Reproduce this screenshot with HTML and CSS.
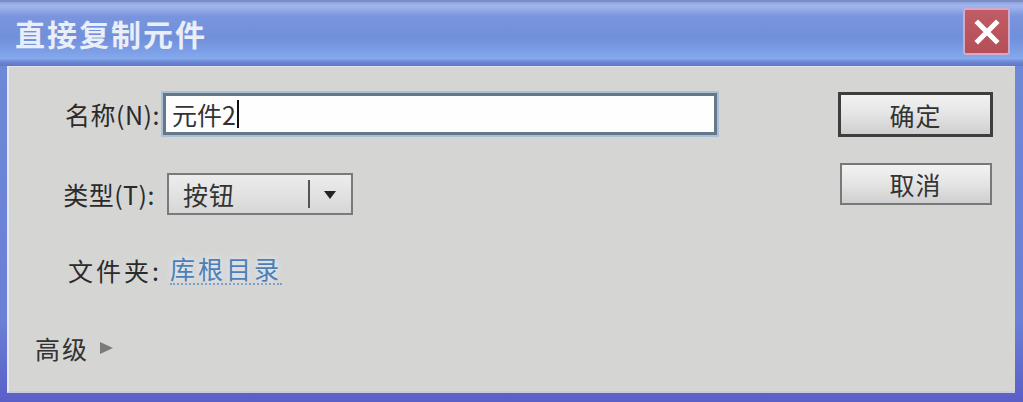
FILE: index.html
```html
<!DOCTYPE html>
<html lang="zh">
<head>
<meta charset="utf-8">
<link rel="stylesheet" href="styles.css">
</head>
<body>
<div class="window">
  <div class="titlebar">
    <span class="title">直接复制元件</span>
    <button class="close" aria-label="关闭">
      <svg width="30" height="30" viewBox="0 0 30 30"><path d="M6 6 L24 24 M24 6 L6 24" stroke="#fff" stroke-width="5" stroke-linecap="square"/></svg>
    </button>
  </div>
  <div class="content">
    <div class="form">
      <div class="row row-name">
        <span class="label">名称(N):</span>
        <div class="input"><span>元件2</span><span class="caret"></span></div>
      </div>
      <div class="row row-type">
        <span class="label">类型(T):</span>
        <div class="select">
          <span class="select-text">按钮</span>
          <span class="select-sep"></span>
          <span class="select-arrow"></span>
        </div>
      </div>
      <div class="row row-folder">
        <span class="label">文件夹:</span>
        <a class="link">库根目录</a>
      </div>
      <div class="row row-adv">
        <span class="adv">高级</span>
        <span class="tri"></span>
      </div>
    </div>
    <div class="buttons">
      <button class="btn btn-default">确定</button>
      <button class="btn">取消</button>
    </div>
  </div>
</div>
</body>
</html>
```

FILE: styles.css
```css
* { box-sizing: border-box; }
html, body { margin: 0; padding: 0; }
body {
  width: 1023px;
  height: 402px;
  overflow: hidden;
  font-family: "Noto Sans CJK SC", "Liberation Sans", sans-serif;
}
.window {
  width: 1023px;
  height: 402px;
  display: flex;
  flex-direction: column;
  background: linear-gradient(180deg, #6f8bd8 0%, #6a7fd6 80%, #5a5fc8 100%);
  border-top: 2px solid #7b8cc2;
  padding: 0 8px 9px 7px;
}
.titlebar {
  height: 64px;
  margin: 0 -8px 0 -7px;
  display: flex;
  align-items: center;
  justify-content: space-between;
  padding: 0 13px 0 15px;
  background: linear-gradient(180deg, #8ea2de 0%, #a3b6ef 6%, #7a95dd 22%, #7090da 55%, #7c9fe6 78%, #86aaee 88%, #6a86d2 94%, #5f78c6 100%);
  flex-shrink: 0;
}
.title {
  color: #e9eef9;
  font-size: 30px;
  font-weight: 700;
  letter-spacing: 2px;
  line-height: 1;
  margin-top: -2px;
}
.close {
  width: 47px;
  height: 47px;
  border: 2px solid #d4a8c6;
  border-radius: 3px;
  background: linear-gradient(180deg, #c05c64 0%, #b44f58 100%);
  display: flex;
  align-items: center;
  justify-content: center;
  padding: 0;
  margin-top: -5px;
}
.close svg { display: block; }
.content {
  flex: 1;
  background: #d5d5d4;
  border-left: 2px solid #e4e6f0;
  border-top: 1px solid #e0e2ec;
  border-bottom: 2px solid #c8ccdf;
  display: flex;
  justify-content: space-between;
  color: #222;
  font-size: 25px;
}
.form {
  display: flex;
  flex-direction: column;
  padding-top: 26px;
}
.row {
  display: flex;
  align-items: center;
  height: 42px;
}
.label {
  text-align: right;
  line-height: 1;
  color: #2a2a2a;
}
.row-name .label { width: 154px; padding-right: 3px; letter-spacing: 0.5px; }
.input {
  width: 554px;
  height: 42px;
  background: #fefefe;
  border: 3px solid #667887;
  box-shadow: 0 0 0 2px #a9c0d6;
  display: flex;
  align-items: center;
  padding-left: 6px;
  font-size: 25px;
  color: #333;
}
.caret {
  width: 2px;
  height: 28px;
  background: #111;
  margin-left: 1px;
}
.row-type { margin-top: 38px; }
.row-type .label { width: 158px; padding-right: 12px; letter-spacing: 0.5px; }
.select {
  width: 186px;
  height: 42px;
  border: 2px solid #7a7a7a;
  background: linear-gradient(180deg, #ececec 0%, #e2e2e2 50%, #d6d6d6 100%);
  display: flex;
  align-items: center;
}
.select-text {
  flex: 1;
  padding-left: 14px;
  color: #333;
  letter-spacing: 1px;
}
.select-sep {
  width: 2px;
  height: 28px;
  background: #555;
}
.select-arrow {
  width: 0;
  height: 0;
  border-left: 6px solid transparent;
  border-right: 6px solid transparent;
  border-top: 8px solid #222;
  margin: 2px 15px 0 14px;
}
.row-folder { margin-top: 34px; }
.row-folder .label { width: 161px; padding-right: 8px; letter-spacing: 3px; }
.link {
  color: #4e7fb4;
  border-bottom: 2px dotted #7a9cc6;
  line-height: 1.1;
  padding-bottom: 1px;
  letter-spacing: 3px;
  text-shadow: 0 0 6px #e8f0ff;
}
.row-adv {
  margin-top: 36px;
  padding-left: 26px;
}
.adv { color: #333; line-height: 1; letter-spacing: 2px; }
.tri {
  width: 0;
  height: 0;
  border-top: 6px solid transparent;
  border-bottom: 6px solid transparent;
  border-left: 13px solid #7a7a7a;
  margin-left: 11px;
}
.buttons {
  display: flex;
  flex-direction: column;
  align-items: center;
  padding-top: 25px;
  padding-right: 22px;
  gap: 26px;
}
.btn {
  width: 152px;
  height: 42px;
  font-family: inherit;
  font-size: 25px;
  color: #333;
  border: 2px solid #787878;
  background: linear-gradient(180deg, #f2f2f2 0%, #e4e4e4 50%, #cfcfcf 100%);
  padding: 0;
  letter-spacing: 1px;
}
.btn-default {
  width: 155px;
  height: 45px;
  border: 3px solid #3e3e3e;
}
```
